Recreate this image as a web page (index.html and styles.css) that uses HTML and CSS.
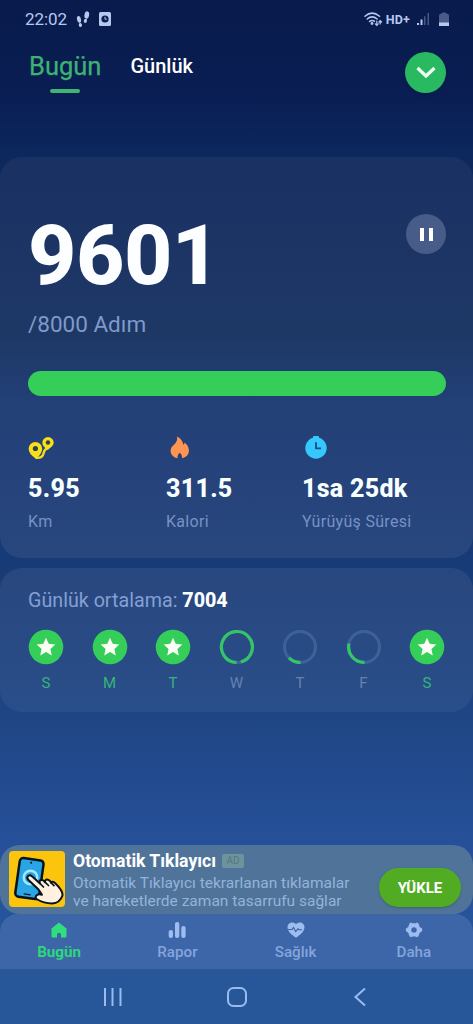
FILE: index.html
```html
<!DOCTYPE html>
<html lang="tr">
<head>
<meta charset="utf-8">
<title>Adım Sayar</title>
<link rel="stylesheet" href="styles.css">
</head>
<body>
<div class="screen">
  <header class="status">
    <span class="clock">22:02</span>
    <svg class="steps" width="14" height="17" viewBox="0 0 14 17" fill="#b7c8ee"><ellipse cx="3" cy="8.4" rx="2" ry="3.5" transform="rotate(-12 3 8.4)"/><ellipse cx="4.4" cy="14" rx="1.6" ry="2" transform="rotate(-15 4.4 14)"/><ellipse cx="10.8" cy="4" rx="2.3" ry="3.7" transform="rotate(12 10.8 4)"/><ellipse cx="9.4" cy="9.9" rx="1.6" ry="2.1" transform="rotate(15 9.4 9.9)"/></svg>
    <svg class="alarm" width="12" height="14" viewBox="0 0 12 14"><rect width="12" height="14" rx="1.5" fill="#b7c8ee"/><circle cx="6" cy="7" r="3.6" fill="#0a1d52"/><path d="M6 4.8V7.2H7.8" fill="none" stroke="#b7c8ee"/></svg>
    <span class="spacer"></span>
    <svg width="19" height="15" viewBox="0 0 19 15" fill="none" stroke="#b7c8ee" stroke-width="1.5" stroke-linecap="round"><path d="M1 4.3Q8 -2 15.5 4.3M3.2 7Q8 2.7 13.2 7M5.5 9.5Q8 7.5 10.4 9.2"/><circle cx="8" cy="11.5" r=".7"/><path d="M12.8 9.2V13M11.3 11.8L12.8 13.4L14.2 11.8M16.2 12V8.8M14.9 10L16.2 8.6L17.6 10" stroke-width="1.2"/></svg>
    <span class="hd">HD+</span>
    <svg class="signal" width="13" height="14" viewBox="0 0 13 14" fill="#b7c8ee"><path d="M0 11h2v2H0zM3.5 7.5h2V13h-2z"/><path d="M7 4.3h1.5V13H7zM10.5 1H12v12h-1.500z" opacity=".35"/></svg>
    <svg class="battery" width="10" height="14" viewBox="0 0 10 14"><path d="M0 13.500V3.500Q0 2 2 1.700Q3 .2 5 .2T8 1.700Q10 2 10 3.500V13.500z" fill="#4b5b88"/><path d="M0 10.500H10V14H0z" fill="#b7c8ee"/></svg>
  </header>

  <nav class="tabs">
    <div class="tab tab-active">Bugün</div>
    <div class="tab">Günlük</div>
    <button class="round-more" aria-label="Aç"><svg width="20" height="13" viewBox="0 0 20 13"><path d="M1.500 2L10 10L18.500 2" fill="none" stroke="#f4fff6" stroke-width="3.200"/></svg></button>
  </nav>

  <section class="card today">
    <div class="today-head">
      <div class="count">9601</div>
      <button class="pause" aria-label="Duraklat"><i></i><i></i></button>
    </div>
    <div class="goal">/8000 Adım</div>
    <div class="bar"></div>
    <div class="stats">
      <div class="stat">
        <svg width="26" height="24" viewBox="0 0 26 24"><path d="M7.500 21.700Q14.500 22.500 15.500 17.500T20.500 12" fill="none" stroke="#f3dc1d" stroke-width="2.400"/><path d="M8 22.800Q.6 18 .6 12.800A6.800 6.800 0 0 1 14.200 12.800Q14.200 17.500 8 22.800z" fill="#f5e01b"/><path d="M19.500 13.800Q14.300 10.500 14.300 6.800A5.700 5.700 0 0 1 25.700 6.800Q25.500 10.500 19.500 13.800z" fill="#f5e01b"/><circle cx="7.400" cy="12.500" r="2.600" fill="#31404b"/><circle cx="20" cy="6.500" r="2.200" fill="#31404b"/></svg>
        <strong>5.95</strong><span>Km</span>
      </div>
      <div class="stat">
        <svg class="flame" width="20" height="24" viewBox="0 0 20 24"><path d="M7 .6Q12.500 3.400 13.300 8.800Q14.600 8 14.800 6.500Q19.500 11 18.900 15.700Q18 20.800 12 22.300Q12.500 19 9.800 16.800Q7.200 18.500 7.600 22.300Q1.500 21 .6 15.700Q.4 11.500 3.500 9.300Q8 5.800 7 .6z" fill="#ff9453"/></svg>
        <strong>311.5</strong><span>Kalori</span>
      </div>
      <div class="stat">
        <svg class="watch" width="22" height="24" viewBox="0 0 22 24"><rect x="8" y="0" width="6" height="4" rx="1" fill="#35c8ff"/><circle cx="11" cy="12" r="10.700" fill="#35c8ff"/><path d="M11 6.300V12.300H16" fill="none" stroke="#174e82" stroke-width="1.800"/></svg>
        <strong>1sa 25dk</strong><span>Yürüyüş Süresi</span>
      </div>
    </div>
  </section>

  <section class="card week">
    <div class="average">Günlük ortalama: <b>7004</b></div>
    <div class="days">
      <div class="day done"><svg viewBox="0 0 36 36"><circle cx="18" cy="18" r="17.300"/><path class="star" d="M18 8.800L20.700 14.800L27.300 15.500L22.400 19.900L23.800 26.400L18 23.100L12.200 26.400L13.600 19.900L8.700 15.500L15.300 14.800z"/></svg>S</div>
      <div class="day done"><svg viewBox="0 0 36 36"><circle cx="18" cy="18" r="17.300"/><path class="star" d="M18 8.800L20.700 14.800L27.300 15.500L22.400 19.900L23.800 26.400L18 23.100L12.200 26.400L13.600 19.900L8.700 15.500L15.300 14.800z"/></svg>M</div>
      <div class="day done"><svg viewBox="0 0 36 36"><circle cx="18" cy="18" r="17.300"/><path class="star" d="M18 8.800L20.700 14.800L27.300 15.500L22.400 19.900L23.800 26.400L18 23.100L12.200 26.400L13.600 19.900L8.700 15.500L15.300 14.800z"/></svg>T</div>
      <div class="day"><svg viewBox="0 0 36 36"><circle class="track" cx="18" cy="18" r="15.500"/><path class="arc" d="M17.500 33.500A15.500 15.500 0 1 1 21.800 33"/></svg>W</div>
      <div class="day"><svg viewBox="0 0 36 36"><circle class="track" cx="18" cy="18" r="15.500"/><path class="arc" d="M18.500 33.400A15.500 15.500 0 0 1 7 28.900"/></svg>T</div>
      <div class="day"><svg viewBox="0 0 36 36"><circle class="track" cx="18" cy="18" r="15.500"/><path class="arc" d="M18.500 33.400A15.500 15.500 0 0 1 3 14.500"/></svg>F</div>
      <div class="day done"><svg viewBox="0 0 36 36"><circle cx="18" cy="18" r="17.300"/><path class="star" d="M18 8.800L20.700 14.800L27.300 15.500L22.400 19.900L23.800 26.400L18 23.100L12.200 26.400L13.600 19.900L8.700 15.500L15.300 14.800z"/></svg>S</div>
    </div>
  </section>

  <aside class="ad">
    <svg class="ad-icon" width="56" height="56" viewBox="0 0 56 56"><rect width="56" height="56" rx="4" fill="#fcc50d"/><g transform="rotate(8 20 27)"><rect x="8.500" y="8" width="24" height="39" rx="3.500" fill="#28a5e4" stroke="#09131b" stroke-width="2.500"/><circle cx="20" cy="11.500" r="1" fill="#09131b"/><path d="M17 43.500H24" stroke="#09131b" stroke-width="1.400"/></g><circle cx="21.500" cy="26.500" r="6.800" fill="none" stroke="#a5e6ff" stroke-width="2.500"/><path d="M18.700 25.500Q20.500 23 23 25.200L31 32.500Q29.800 29.500 32.300 29.100Q34.600 28.600 36 31.200Q36 28.100 39 28.700Q41.200 29.200 42 31.700Q43.500 29.700 46 32Q54 39.500 53.500 44.500Q51 52 43 52.500Q35 52.500 27.500 48Q25.500 46 28 44Q30 42.500 33 43.700L29.500 38.500L19.500 29Q17.500 27.200 18.700 25.500z" fill="#fff0df" stroke="#09131b" stroke-width="2" stroke-linejoin="round"/><path d="M31 32.500L34.500 36M36 31.200L39.500 34.500M42 31.700L45 34.600" stroke="#09131b" stroke-width="1.700" stroke-linecap="round"/></svg>
    <div class="ad-copy">
      <div class="ad-title"><span>Otomatik Tıklayıcı</span> <em>AD</em></div>
      <div class="ad-line line-one">Otomatik Tıklayıcı tekrarlanan tıklamalar</div>
      <div class="ad-line">ve hareketlerde zaman tasarrufu sağlar</div>
    </div>
    <button class="install">YÜKLE</button>
  </aside>

  <nav class="menu">
    <div class="item current"><svg width="18" height="18" viewBox="0 0 18 18"><path d="M9 1.500L16.500 7.500V15.500Q16.500 16.500 15 16.500H11V13.500Q11 11.700 9 11.700T7 13.500V16.500H3Q1.500 16.500 1.500 15.500V7.500z"/></svg>Bugün</div>
    <div class="item"><svg width="18" height="18" viewBox="0 0 18 18"><rect x=".7" y="9" width="4.300" height="8" rx="2"/><rect x="7" y="1" width="4.300" height="16" rx="2"/><rect x="13.300" y="5" width="4.300" height="12" rx="2"/></svg>Rapor</div>
    <div class="item"><svg width="18" height="18" viewBox="0 0 18 18"><path d="M9 3C6-.1.3 1.500.5 6.500C.8 11 5 14 9 16.700C13 14 17.200 11 17.500 6.500C17.700 1.500 12 -.1 9 3z"/><path d="M1 8.500H5L6.500 6.500L8.700 10.500L11 7.800L12 8.700H15" fill="none" stroke="#3b62a5" stroke-width="1.100"/></svg>Sağlık</div>
    <div class="item"><svg width="18" height="18" viewBox="0 0 18 18"><path fill-rule="evenodd" d="M5 2Q6 1 7.300 2.300H10.700Q12 1 13 2L14.200 4Q14 6 15.500 6.500Q17.500 7 17.300 8.500Q17.500 10.500 15.500 11.200Q14 12 14.200 13.800L13 15.800Q12 16.700 10.700 15.400H7.300Q6 16.700 5 15.800L3.800 13.800Q4 12 2.500 11.200Q.5 10.500 .7 8.800Q.5 7 2.500 6.400Q4 6 3.800 4zM9 6.200A2.700 2.700 0 1 0 9 11.600A2.700 2.700 0 1 0 9 6.200z"/></svg>Daha</div>
  </nav>
  <footer class="system">
    <svg width="20" height="20" viewBox="0 0 20 20"><path d="M2 1V19M9.500 1V19M17.500 1V19"/></svg>
    <svg width="20" height="20" viewBox="0 0 20 20"><rect x="1" y="1" width="18" height="18" rx="5.500"/></svg>
    <svg width="20" height="20" viewBox="0 0 20 20"><path d="M15 1.500L5.500 10L15 18.500"/></svg>
  </footer>
</div>
</body>
</html>
```

FILE: styles.css
```css
* { box-sizing: border-box; }
body { margin: 0; font-family: Roboto, sans-serif; }
button { border: 0; padding: 0; font-family: inherit; }
svg { display: block; flex: none; }

.screen {
  width: 473px;
  height: 1024px;
  overflow: hidden;
  display: flex;
  flex-direction: column;
  background: linear-gradient(#091b4c 0, #0a1e54 100px, #0c285d 155px, #173b77 560px, #1f4584 715px, #26519a 850px, #26589d 1024px);
}

.status {
  height: 38px;
  padding: 0 24px 0 25px;
  display: flex;
  align-items: center;
  color: #b7c8ee;
}
.clock { font-size: 17px; line-height: 20px; letter-spacing: -.1px; }
.steps { margin-left: 9px; }
.alarm { margin-left: 9px; }
.spacer { flex: 1; }
.hd { font-size: 12.500px; font-weight: 700; letter-spacing: .2px; margin-left: 3px; }
.signal { margin-left: 7px; }
.battery { margin-left: 9px; }

.tabs {
  height: 119px;
  flex: none;
  padding: 14px 27px 0 29px;
  display: flex;
  align-items: flex-start;
}
.tab { font-size: 20px; font-weight: 500; line-height: 28px; color: #fff; }
.tab-active {
  color: #3cb371;
  font-size: 25.500px;
  font-weight: 400;
  margin-right: 29px;
  display: flex;
  flex-direction: column;
  align-items: center;
  -webkit-text-stroke: .25px #3cb371;
}
.tab-active::after {
  content: "";
  width: 30px;
  height: 4px;
  margin-top: 9px;
  border-radius: 2px;
  background: #3fb573;
}
.round-more {
  width: 41px;
  height: 41px;
  margin-left: auto;
  border-radius: 50%;
  background: #29b960;
  display: grid;
  place-items: center;
  box-shadow: 0 2px 3px #05184577;
}

.card { flex: none; border-radius: 22px; }
.today {
  height: 401px;
  padding: 50px 27px 0 28px;
  background: linear-gradient(#1a3163, #1e3866 45%, #223f76 60%, #29477f);
}
.today-head { display: flex; justify-content: space-between; height: 96px; }
.count { font-size: 84px; font-weight: 800; line-height: 98px; letter-spacing: -.5px; color: #fcfeff; }
.pause {
  width: 40px;
  height: 40px;
  margin-top: 7px;
  border-radius: 50%;
  background: #475c88;
  display: flex;
  gap: 5px;
  align-items: center;
  justify-content: center;
}
.pause i { width: 4px; height: 13px; background: #fff; }
.goal { height: 39px; padding-top: 7px; font-size: 22.500px; line-height: 28px; color: #7f9acb; }
.bar { height: 25px; margin-top: 29px; border-radius: 13px; background: #34ce58; }
.stats {
  display: grid;
  grid-template-columns: 138px 136px 1fr;
  margin-top: 40px;
}
.stat { display: flex; flex-direction: column; }
.flame { margin-left: 4px; }
.watch { margin-left: 3px; }
.stat strong { font-size: 25px; font-weight: 800; line-height: 30px; letter-spacing: .3px; margin-top: 14px; color: #f8ffff; }
.stat span { font-size: 16px; line-height: 20px; letter-spacing: .3px; margin-top: 8px; color: #7792c3; }

.week {
  height: 144px;
  margin-top: 10px;
  padding: 20px 28px 0;
  background: linear-gradient(#29477f, #294e89);
}
.average { font-size: 19.700px; line-height: 26px; color: #85a0d3; }
.average b { font-weight: 800; color: #fcfeff; }
.days { display: flex; justify-content: space-between; margin-top: 15px; }
.day {
  width: 36px;
  display: flex;
  flex-direction: column;
  align-items: center;
  font-size: 15px;
  line-height: 20px;
  color: #6681b0;
}
.day svg { width: 36px; height: 36px; margin-bottom: 8px; }
.done { color: #35b47a; }
.done circle { fill: #34ce58; }
.star { fill: #fcfff7; }
.day .track { fill: none; stroke: #3d6298; stroke-width: 3; }
.arc { fill: none; stroke: #33c667; stroke-width: 3.200; }

.ad {
  height: 69px;
  flex: none;
  margin-top: 133px;
  padding: 0 12px 0 9px;
  display: flex;
  border-radius: 20px;
  background: #507399;
}
.ad-icon { margin-top: 6px; }
.ad-copy { margin-left: 8px; padding-top: 5px; white-space: nowrap; }
.ad-title {
  display: flex;
  align-items: center;
  height: 22px;
  font-size: 17.600px;
  font-weight: 700;
  color: #fff;
}
.ad-title em {
  width: 22px;
  height: 14px;
  margin-left: 6px;
  border-radius: 2px;
  background: #6f939d;
  color: #507a83;
  font: 10px/14px Roboto, sans-serif;
  text-align: center;
}
.ad-line { font-size: 15.500px; line-height: 18px; color: #93b3dc; }
.line-one { margin-top: 2px; }
.install {
  width: 82px;
  height: 39px;
  margin: 23px 0 0 auto;
  border-radius: 20px;
  background: #52ac23;
  color: #fff;
  font-size: 15px;
  font-weight: 700;
  box-shadow: 0 1px 2px #315c5499;
}

.menu {
  height: 55px;
  flex: none;
  display: grid;
  grid-template-columns: repeat(4, 118.250px);
  background: #3d66a8;
  border-radius: 18px 18px 0 0;
}
.item {
  display: flex;
  flex-direction: column;
  align-items: center;
  padding-top: 7px;
  font-size: 15.200px;
  font-weight: 500;
  line-height: 21px;
  color: #84a5dc;
}
.item svg { fill: #9dbcef; margin-bottom: 3px; }
.current { color: #2ed77b; font-weight: 700; }
.current svg { fill: #30df7b; }
.system {
  height: 55px;
  flex: none;
  padding: 0 103px;
  display: flex;
  justify-content: space-between;
  align-items: center;
  background: #275799;
}
.system svg { fill: none; stroke: #98bcf0; stroke-width: 2; }
```
